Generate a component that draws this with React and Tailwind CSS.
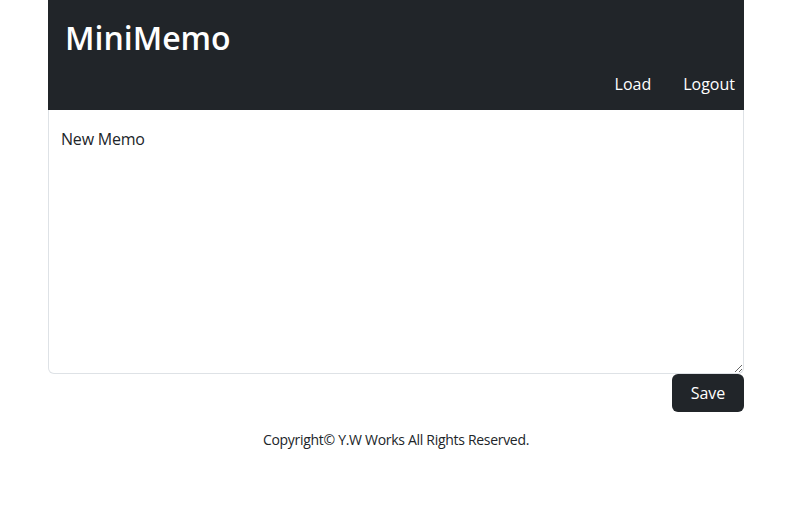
import { useState } from "react";

export default function App() {
  const [memo, setMemo] = useState("New Memo");

  return (
    <div className="min-h-[522px] bg-white text-[#212529] font-['Open_Sans',sans-serif]">
      <div className="mx-auto w-[696px]">
        {/* Header */}
        <header className="h-[110px] bg-[#212529] flex flex-col">
          <h1 className="pl-[17px] pt-[16px] text-[32px] leading-[44px] font-semibold text-white">
            MiniMemo
          </h1>
          <nav className="flex justify-end gap-8 mt-[12px] pr-[9px]">
            <a className="text-[16px] leading-6 text-white cursor-pointer">Load</a>
            <a className="text-[16px] leading-6 text-white cursor-pointer">Logout</a>
          </nav>
        </header>

        {/* Memo */}
        <textarea
          value={memo}
          onChange={(e) => setMemo(e.target.value)}
          className="block w-full h-[264px] border border-[#dee2e6] border-t-0 rounded-b-md px-3 pt-[17px] text-[16px] leading-6 text-[#212529] outline-none tracking-[-0.2px] font-['Open_Sans',sans-serif]"
        />

        <div className="flex justify-end">
          <button className="h-[38px] w-[72px] rounded-md bg-[#212529] text-white text-[16px]">
            Save
          </button>
        </div>

        {/* Footer */}
        <footer className="mt-[18px] text-center text-[14px] leading-5 tracking-[-0.3px]">
          Copyright© Y.W Works All Rights Reserved.
        </footer>
      </div>
    </div>
  );
}
